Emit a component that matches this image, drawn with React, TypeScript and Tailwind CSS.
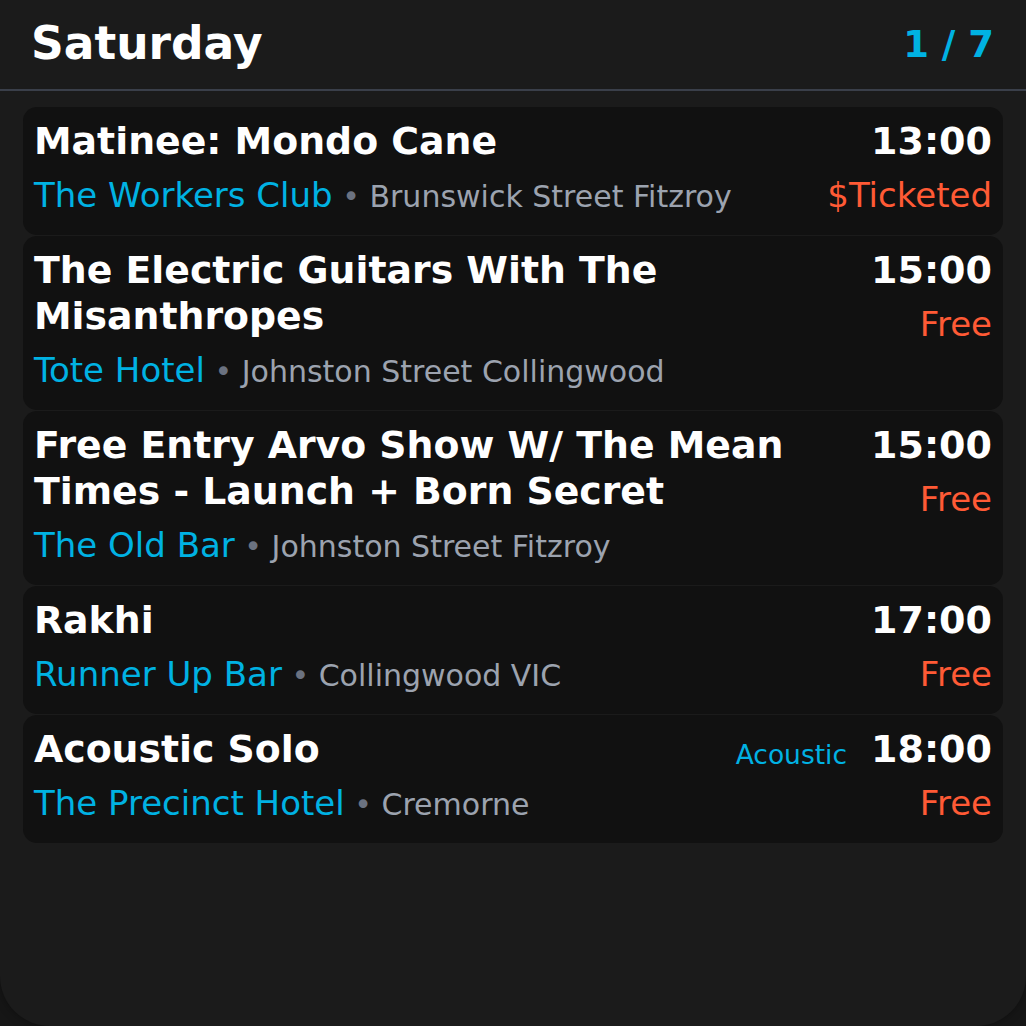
import React from 'react';

type Gig = {
  title: string;
  venue: string;
  address: string;
  time: string;
  price: string;
  tag?: string;
};

const GIGS: Gig[] = [
  { title: 'Matinee: Mondo Cane', venue: 'The Workers Club', address: 'Brunswick Street Fitzroy', time: '13:00', price: '$Ticketed' },
  { title: 'The Electric Guitars With The Misanthropes', venue: 'Tote Hotel', address: 'Johnston Street Collingwood', time: '15:00', price: 'Free' },
  { title: 'Free Entry Arvo Show W/ The Mean Times - Launch + Born Secret', venue: 'The Old Bar', address: 'Johnston Street Fitzroy', time: '15:00', price: 'Free' },
  { title: 'Rakhi', venue: 'Runner Up Bar', address: 'Collingwood VIC', time: '17:00', price: 'Free' },
  { title: 'Acoustic Solo', venue: 'The Precinct Hotel', address: 'Cremorne', time: '18:00', price: 'Free', tag: 'Acoustic' },
];

const GigCard = ({ gig }: { gig: Gig }) => (
  <div className="flex gap-4 rounded-[14px] bg-[#111111] px-[11px] pt-[11px] pb-[17px]">
    <div className="min-w-0 flex-1">
      <div className="text-[37.8px] leading-[46px] font-bold text-white">{gig.title}</div>
      <div className="mt-[8px] h-[46px] text-[34px] leading-[46px] whitespace-nowrap">
        <span className="text-[#00b2e3]">{gig.venue}</span>
        <span className="text-[30px] leading-none text-[#6b7280]"> • </span>
        <span className="text-[30px] leading-none text-[#9ca3af]">{gig.address}</span>
      </div>
    </div>
    <div className="flex shrink-0 flex-col items-end">
      <div className="flex h-[46px] items-baseline gap-[24px] leading-[46px]">
        {gig.tag && <span className="relative top-[2px] text-[26.5px] leading-none text-[#00b2e3]">{gig.tag}</span>}
        <span className="text-[38px] font-bold text-white">{gig.time}</span>
      </div>
      <div className="mt-[8px] text-[34px] leading-[46px] text-[#ff5a35]">{gig.price}</div>
    </div>
  </div>
);

export default function App() {
  return (
    <div className="h-[1026px] w-full bg-[#161616] font-['DejaVu_Sans',sans-serif]">
      <div className="h-full rounded-b-[50px] bg-[#1b1b1b] shadow-[0_0_10px_rgba(0,0,0,0.35)]">
        <header className="flex h-[91px] items-center justify-between border-b-2 border-[#3a3f4a] pl-[31px] pr-[32px]">
          <h1 className="text-[45.5px] font-bold text-white">Saturday</h1>
          <span className="text-[37px] font-bold text-[#00b2e3]">1 / 7</span>
        </header>
        <div className="flex flex-col gap-px px-[23px] pt-[16px]">
          {GIGS.map((gig, i) => (
            <GigCard key={i} gig={gig} />
          ))}
        </div>
      </div>
    </div>
  );
}
